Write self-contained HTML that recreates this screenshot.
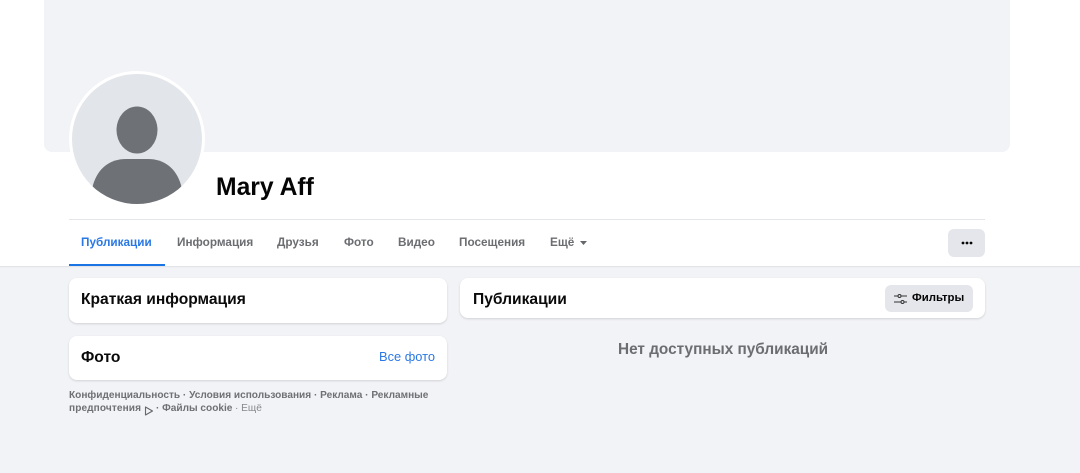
<!DOCTYPE html>
<html lang="ru"><head><meta charset="utf-8"><title>Mary Aff</title>
<style>
html,body{margin:0;padding:0}
body{width:1080px;height:473px;overflow:hidden;background:#f2f3f7;position:relative;font-family:"Liberation Sans",sans-serif;color:#050505}
div,span,svg{position:absolute}
.t{white-space:nowrap;font-weight:bold;line-height:1}
.tab{font-size:11.75px;color:#6b6d71;top:237px}
.card{background:#fff;border-radius:8px;box-shadow:0 1px 2px rgba(0,0,0,.14)}
.h{font-size:15.6px;color:#0a0a0a}
.f{font-size:10.1px;color:#6e7074}
</style></head><body>
<div style="left:0;top:0;width:1080px;height:266px;background:#fff;box-shadow:0 1px 1px rgba(0,0,0,.08)"></div>
<div style="left:44px;top:0;width:966px;height:152px;background:#f2f3f7;border-radius:0 0 8px 8px"></div>
<svg style="left:68px;top:70px" width="138" height="138" viewBox="0 0 138 138">
<defs><clipPath id="c"><circle cx="69" cy="69" r="65"/></clipPath></defs>
<circle cx="69" cy="69" r="68" fill="#fff"/>
<circle cx="69" cy="69" r="65" fill="#e2e5e9"/>
<g clip-path="url(#c)" fill="#6e7175">
<ellipse cx="69" cy="60" rx="20.5" ry="23.5"/>
<path d="M25 115C30 98 42 89 58 89H80C96 89 108 98 113 115L118 138H20Z"/>
</g></svg>
<div class="t" style="left:216px;top:175.5px;font-size:24.7px">Mary Aff</div>
<div style="left:69px;top:219px;width:916px;height:1px;background:#e4e6eb"></div>
<div class="t tab" style="left:81px;color:#2a78e4">Публикации</div>
<div style="left:69px;top:264px;width:96px;height:2px;background:#1b74e4"></div>
<div class="t tab" style="left:177px">Информация</div>
<div class="t tab" style="left:277px">Друзья</div>
<div class="t tab" style="left:344px">Фото</div>
<div class="t tab" style="left:398px">Видео</div>
<div class="t tab" style="left:459px">Посещения</div>
<div class="t tab" style="left:550px">Ещё</div>
<svg style="left:580px;top:241px" width="7" height="4" viewBox="0 0 7 4"><path d="M0 0H7L3.5 4Z" fill="#65676b"/></svg>
<div style="left:948px;top:229px;width:37px;height:28px;background:#e4e6eb;border-radius:6px"></div>
<svg style="left:961px;top:241px" width="12" height="4" viewBox="0 0 12 4" fill="#050505"><circle cx="2" cy="2" r="1.4"/><circle cx="6" cy="2" r="1.4"/><circle cx="10" cy="2" r="1.4"/></svg>
<div class="card" style="left:69px;top:278px;width:378px;height:45px"></div>
<div class="t h" style="left:81px;top:292px">Краткая информация</div>
<div class="card" style="left:69px;top:336px;width:378px;height:44px"></div>
<div class="t h" style="left:81px;top:350px">Фото</div>
<div class="t" style="left:379px;top:351px;font-size:12.85px;font-weight:normal;color:#2a78e4">Все фото</div>
<div class="t f" style="left:69px;top:391px">Конфиденциальность · Условия использования · Реклама · Рекламные</div>
<div class="t f" style="left:69px;top:403.5px;letter-spacing:.1px">предпочтения</div>
<svg style="left:144px;top:406px" width="10" height="10" viewBox="0 0 10 10"><path d="M1.5 1V9L8.5 5Z" fill="none" stroke="#65676b" stroke-width="1.1" stroke-linejoin="round"/></svg>
<div class="t f" style="left:156px;top:403.5px">· Файлы cookie</div>
<div class="t f" style="left:235px;top:403.5px;font-weight:normal;color:#85878b">· Ещё</div>
<div class="card" style="left:460px;top:278px;width:525px;height:40px"></div>
<div class="t h" style="left:473px;top:291.5px">Публикации</div>
<div style="left:885px;top:285px;width:88px;height:27px;background:#e4e6eb;border-radius:6px"></div>
<svg style="left:894px;top:293px" width="13" height="12" viewBox="0 0 13 12" fill="none" stroke="#333" stroke-width="1"><path d="M0 3H4M7 3H13M0 9H7M10 9H13"/><circle cx="5.5" cy="3" r="1.5"/><circle cx="8.5" cy="9" r="1.5"/></svg>
<div class="t" style="left:912px;top:293px;font-size:11.4px">Фильтры</div>
<div class="t" style="left:618px;top:341.5px;font-size:15.35px;color:#6b6d71">Нет доступных публикаций</div>
</body></html>
